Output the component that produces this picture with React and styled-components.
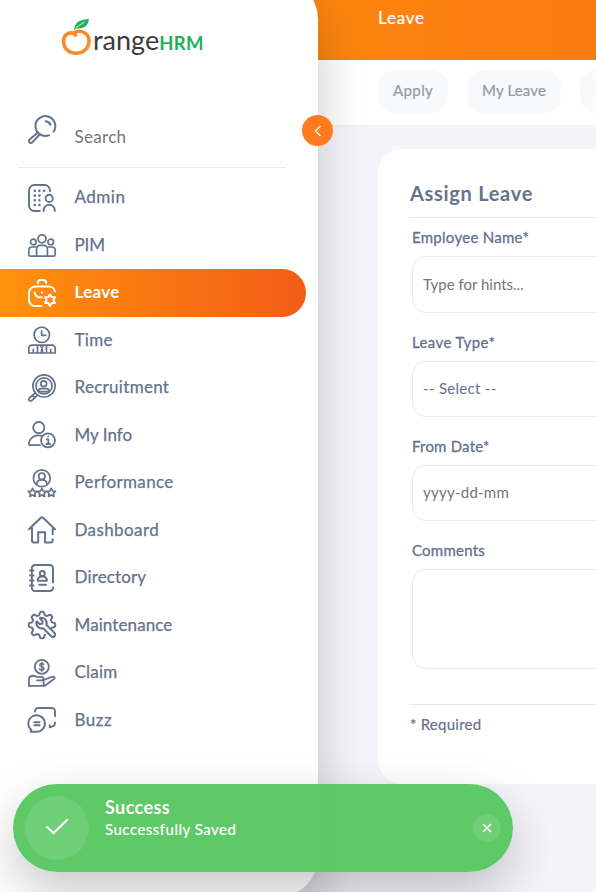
import React from 'react';
import styled, { createGlobalStyle } from 'styled-components';

const Global = createGlobalStyle`
  * { box-sizing: border-box; }
  body { margin: 0; font-family: Lato, "Open Sans", sans-serif; color: #64728c; overflow: hidden; }
  input, textarea, button { font: inherit; }
`;

const Page = styled.div`
  display: grid;
  grid-template: 892px / 1fr;
  height: 892px;
  overflow: hidden;
  background: #f5f4fa;
`;

const Text = styled.span`
  white-space: nowrap;
  letter-spacing: ${p => p.$ls || 0}px;
`;

/* ---------- sidebar ---------- */
const Sidebar = styled.aside`
  grid-area: 1 / 1;
  z-index: 2;
  width: 318px;
  height: 918px;
  margin-top: -21px;
  padding-top: 21px;
  background: #fff;
  border-radius: 0 40px 40px 0;
  box-shadow: 0 25px 50px rgba(0, 0, 0, 0.21);
  position: relative;
`;

const Brand = styled.div`
  display: flex;
  height: 60px;
  padding: 17px 0 0 60px;
`;

const BrandName = styled.div`
  display: flex;
  align-items: baseline;
  height: 44px;
  margin: 3px 0 0 -1px;
  line-height: 40px;
  font-size: 27px;
  color: #3b3b3d;
`;

const BrandSuffix = styled(Text)`
  font-size: 18.5px;
  font-weight: 700;
  color: #20b05b;
`;

const Collapse = styled.button`
  position: absolute;
  right: -15px;
  top: 136px;
  width: 31px;
  height: 31px;
  padding: 0;
  border: 0;
  border-radius: 50%;
  background: #ff7b1d;
  display: grid;
  place-items: center;
`;

const SearchRow = styled.div`
  display: flex;
  height: 53px;
  margin: 54.5px 32px 6.5px 18px;
  padding: 1px 0 0 10px;
  border-bottom: 1px solid #e9eaee;
  gap: 18.5px;
  font-size: 17px;
  color: #757575;
`;

const SearchText = styled(Text)`
  line-height: 20px;
  padding-top: 11.5px;
`;

const Item = styled.a`
  display: flex;
  align-items: center;
  gap: 18.5px;
  height: 47.5px;
  width: 306px;
  padding-left: 28px;
  font-size: 17px;
  font-weight: ${p => (p.$active ? 700 : 400)};
  -webkit-text-stroke: ${p => (p.$active ? 0 : 0.25)}px;
  color: ${p => (p.$active ? '#fff' : '#64728c')};
  border-radius: 0 24px 24px 0;
  background: ${p => (p.$active ? 'linear-gradient(90deg, #ff920b, #f35c17)' : 'none')};
`;

const ItemLabel = styled(Text)`
  padding-bottom: 2px;
`;

const Glyph = styled.svg`
  width: 28px;
  height: 28px;
  flex: none;
  fill: none;
  stroke: currentColor;
  stroke-width: ${p => p.$w || 1.7};
  stroke-linecap: round;
  stroke-linejoin: round;
  overflow: visible;
  color: ${p => p.$color || 'inherit'};
`;

/* ---------- main area ---------- */
const Main = styled.main`
  grid-area: 1 / 1;
  min-width: 0;
  overflow: hidden;
`;

const Header = styled.header`
  width: 1400px;
  height: 60px;
  padding: 7px 0 0 378px;
  background: linear-gradient(90deg, #ff920b, #f35c17);
  color: #fff;
  font-size: 17px;
  line-height: 22px;
  -webkit-text-stroke: 0.2px;
`;

const Tabs = styled.nav`
  display: flex;
  gap: 19px;
  height: 66px;
  padding: 10px 0 0 378px;
  background: #fff;
  border-bottom: 1px solid #efeff2;
`;

const Tab = styled.a`
  flex: none;
  width: ${p => p.$w}px;
  height: 43px;
  padding-left: 15px;
  border-radius: 17px;
  background: #f7f9fb;
  color: #929baa;
  font-size: 15px;
  line-height: 41px;
  -webkit-text-stroke: 0.2px;
`;

const Card = styled.section`
  width: 1000px;
  height: 635px;
  margin: 23px 0 0 378px;
  padding: 31px 31px 0;
  border-radius: 24px;
  background: #fff;
`;

const Title = styled.h1`
  height: 38px;
  margin: 0;
  padding-left: 1px;
  border-bottom: 1px solid #e6e8ee;
  font-size: 20px;
  line-height: 26px;
  font-weight: 700;
`;

const Field = styled.label`
  display: flex;
  flex-direction: column;
  gap: 10px;
  margin: 0 0 ${p => p.$gap}px 3px;
  font-size: 15px;
  line-height: 18px;
`;

const Form = styled.form`
  padding-top: 10px;
`;

const Label = styled(Text)`
  -webkit-text-stroke: 0.3px;
`;

const boxed = `
  width: 500px;
  border: 1px solid #e8eaef;
  border-radius: 14px;
  background: #fff;
  padding: 0 10px;
  font-size: 15px;
  color: #64728c;
  outline: none;
`;

const Input = styled.input`
  ${boxed}
  height: ${p => p.$h}px;
  padding-bottom: 2px;
  letter-spacing: ${p => p.$ls || 0}px;
  &::placeholder { color: #757575; opacity: 1; }
`;

const Select = styled.div`
  ${boxed}
  height: 56px;
  line-height: 52px;
`;

const Area = styled.textarea`
  ${boxed}
  display: block;
  height: 100px;
  resize: none;
`;

const Required = styled.div`
  padding: 10px 0 0 1px;
  border-top: 1px solid #e6e8ee;
  font-size: 15px;
  line-height: 18px;
  -webkit-text-stroke: 0.2px;
`;

/* ---------- toast ---------- */
const Toast = styled.div`
  position: absolute;
  z-index: 3;
  left: 13px;
  top: 784px;
  width: 500px;
  height: 88px;
  padding: 0 12px;
  border-radius: 44px;
  display: flex;
  align-items: center;
  background: rgba(86, 199, 97, 0.96);
  box-shadow: 0 20px 50px rgba(0, 0, 0, 0.22);
  color: #fff;
`;

const Round = styled.div`
  flex: none;
  width: ${p => p.$size}px;
  height: ${p => p.$size}px;
  border-radius: 50%;
  background: rgba(255, 255, 255, 0.11);
  display: grid;
  place-items: center;
`;

const Message = styled.div`
  flex: 1;
  align-self: flex-start;
  display: flex;
  flex-direction: column;
  padding: 12px 0 0 16px;
  font-size: 15px;
  line-height: 21px;
  -webkit-text-stroke: 0.2px;
`;

const Strong = styled(Text)`
  font-size: 18px;
  line-height: 23px;
  font-weight: 700;
  -webkit-text-stroke: 0;
`;

const star = (x, y) =>
  `M${x} ${y - 4.2}l1.3 2.7 3 .4-2.2 2.1.6 3-2.7-1.5-2.7 1.5.6-3-2.2-2.1 3-.4z`;

/* Eight-lobed cog outline, left open at the lower right for the wrench handle. */
const cog = (() => {
  const points = [];
  for (let deg = 72; deg <= 378; deg += 3) {
    const a = (deg * Math.PI) / 180;
    const r = 11.7 + 1.6 * Math.tanh(2.2 * Math.cos(8 * a));
    points.push(`${(14 + r * Math.cos(a)).toFixed(2)} ${(14 + r * Math.sin(a)).toFixed(2)}`);
  }
  return `M${points.join('L')}`;
})();

const icons = {
  search: (
    <>
      <path d="M25.6 15.6A9.9 9.9 0 1 0 21.2 19.2M17.8 5.2a5.5 5.5 0 0 1 4.6 3.6" />
      <path d="M10 16.4L1.6 23.5a1.9 1.9 0 0 0 2.7 2.9L12 18.2" />
    </>
  ),
  admin: (
    <>
      <path d="M11.8 27H6.4A5.4 5.4 0 0 1 1 21.6V6.4A5.4 5.4 0 0 1 6.4 1h10.2A5.4 5.4 0 0 1 22 6.4v.8" />
      <path d="M15.6 27v-.6a5.6 5.6 0 0 1 11.2 0v.6" />
      <circle cx="21.2" cy="14.4" r="3.6" />
      <path strokeWidth="2.6" d="M6.8 6.8h.01M11.4 6.8h.01M16 6.8h.01M6.8 11.6h.01M11.4 11.6h.01M6.8 16.3h.01M11.4 16.3h.01M6.8 21h.01M11.4 21h.01" />
    </>
  ),
  pim: (
    <>
      <circle cx="14" cy="7.8" r="4" />
      <circle cx="5.3" cy="11" r="2.8" />
      <circle cx="22.7" cy="11" r="2.8" />
      <path d="M8.6 25.2v-7.4a3.5 3.5 0 0 1 3.5-3.5h3.8a3.5 3.5 0 0 1 3.5 3.5v7.4M7.6 16H4a3.2 3.2 0 0 0-3.2 3.2v4.500c0 .9.6 1.500 1.500 1.500h23.400c.9 0 1.500-.6 1.500-1.500v-4.500A3.200 3.200 0 0 0 24 16h-3.600" />
    </>
  ),
  leave: (
    <>
      <path d="M9.8 4.3V4a3 3 0 0 1 3-3h2.4a3 3 0 0 1 3 3v.3M13.5 27H7.2A6.2 6.2 0 0 1 1 20.8v-7A6.2 6.2 0 0 1 7.2 7.6h13.6a6.2 6.2 0 0 1 6.2 5M6.5 13.6c1 3.6 3.7 5.2 7.2 4.7M14 13.5h.1" />
      <path d="M22 15.3l1.7 2.8 3.3.1-1.6 2.9 1.6 2.9-3.3.1L22 26.900l-1.700-2.800-3.300-.1 1.600-2.900-1.600-2.900 3.300-.1z" />
    </>
  ),
  time: (
    <>
      <circle cx="13.8" cy="8.8" r="7.7" />
      <path d="M13.6 4.8v4.6h4.2M.8 27v-4.8a3 3 0 0 1 3-3h20.4a3 3 0 0 1 3 3V27zM5.3 27v-3.6M22.7 27v-3.6M9.5 19.2V27M18.5 19.2V27" />
      <path strokeWidth="1.3" d="M12 19.4l2 2.4 2-2.4M14 21.8l-1 5M14 21.8l1 5" />
    </>
  ),
  recruitment: (
    <>
      <circle cx="16" cy="11.9" r="11.1" />
      <circle cx="16" cy="11.9" r="8" />
      <circle cx="15.7" cy="9.7" r="2.9" />
      <path d="M10.6 17.6v-.3c0-1.6 1-2.6 2.6-2.6h5.2c1.6 0 2.6 1 2.6 2.6v.3zM7.1 19.2L1.4 24a1.7 1.7 0 0 0 2.4 2.6l5.4-5.3M4.6 21.5l2.2 2.3" />
    </>
  ),
  info: (
    <>
      <circle cx="10.8" cy="6.6" r="5.6" />
      <path d="M12 24.2H2.4c-1 0-1.6-.6-1.5-1.6.5-5 4.5-8.2 9.4-8.2 1.6 0 3 .3 4.2.9" />
      <circle cx="20" cy="19.3" r="7" />
      <path d="M20.2 15.4h.01M18.7 18.4h1.6V23M18.4 23h3.6" />
    </>
  ),
  performance: (
    <>
      <circle cx="13.8" cy="9.3" r="8.4" />
      <circle cx="13.8" cy="7.3" r="3.2" />
      <path d="M8.7 15.6v-.4c0-2.5 1.9-4.3 5.1-4.3s5.1 1.8 5.1 4.3v.4" />
      <path d={star(4.6, 23.5)} />
      <path d={star(13.9, 23.5)} />
      <path d={star(23.2, 23.5)} />
    </>
  ),
  dashboard: (
    <path d="M1 13.2L12.8 1.8a1.6 1.6 0 0 1 2.3 0L27 13.2M4 12v12.5c0 1.3.7 2 2 2h4.2V16.2h6.9v10.3h5.2c1.6 0 2.4-.8 2.4-2.2v-1M24.7 13v5.2" />
  ),
  directory: (
    <>
      <path d="M25 18.5V4.2A3.2 3.2 0 0 0 21.8 1H7a3.2 3.2 0 0 0-3.2 3.2v19.6A3.2 3.2 0 0 0 7 27h14.8a3.2 3.2 0 0 0 3.2-3.2v-.6M2 6.4h3.6M2 11.5h3.6M2 16.5h3.6M2 21.6h3.6" />
      <circle cx="14.3" cy="9.5" r="2.5" />
      <path d="M9.7 16.8c0-2.7 1.7-4.2 4.6-4.2s4.6 1.5 4.6 4.2zM11.3 20.8h6.7" />
    </>
  ),
  maintenance: (
    <>
      <path d={cog} />
      <path d="M8.6 10.2l3.2 3 2.4-.5.4-2.5-3-3.1c4.4-1.2 8.2 2.6 6.9 6.9l8 7.9a2.2 2.2 0 0 1-3.3 3.3l-8-8c-4.200 1-7.900-2.600-6.600-7z" />
    </>
  ),
  claim: (
    <>
      <circle cx="13.8" cy="7.8" r="7" />
      <path strokeWidth="1.5" d="M15.8 5.7c-.4-.9-1.1-1.2-2-1.2-1.2 0-2 .6-2 1.6 0 2.3 4.1 1 4.1 3.3 0 1.1-.9 1.7-2.1 1.7-1.1 0-1.9-.5-2.2-1.4M13.8 3.3v9" />
      <path d="M1 26.8V18.600c2-2.100 4.900-2.200 7.300-.8h5.200c2.500 0 2.500 3.500 0 3.500H9M15.500 21l8.300-3.200c2.200-.8 3.900.9 2.100 2.200L18 26c-.8.6-1.300.8-2.200.8z" />
      <path d="M1 26.800h15" />
    </>
  ),
  buzz: (
    <>
      <path d="M7 5.6V5.200A3.200 3.200 0 0 1 10.300 2h13.400A3.200 3.200 0 0 1 27 5.200v5M27 16.500v.8a3 3 0 0 1-2 2.800l-3.300 1.400v-2.300" />
      <path d="M3.300 23.900A8.300 8.300 0 1 1 8 25.800H2.600zM6.400 16.200h5.200M6.400 19.300h5.200" />
    </>
  ),
};

const Icon = ({ name, ...rest }) => (
  <Glyph viewBox="0 0 28 28" aria-hidden="true" {...rest}>{icons[name]}</Glyph>
);

const menu = [
  ['admin', 'Admin', 0.5, 1.9],
  ['pim', 'PIM', -0.1, 1.7],
  ['leave', 'Leave', 0.3, 2],
  ['time', 'Time', 0.3, 1.7],
  ['recruitment', 'Recruitment', 0.3, 1.7],
  ['info', 'My Info', 0, 1.8],
  ['performance', 'Performance', 0.35, 1.7],
  ['dashboard', 'Dashboard', 0.4, 2],
  ['directory', 'Directory', 0.15, 2],
  ['maintenance', 'Maintenance', 0.1, 2],
  ['claim', 'Claim', 0.2, 1.8],
  ['buzz', 'Buzz', 0.5, 1.9],
];

export default function App() {
  return (
    <>
      <Global />
      <Page>
        <Main>
          <Header><Text $ls={0.8}>Leave</Text></Header>
          <Tabs>
            <Tab $w={70}><Text $ls={0.4}>Apply</Text></Tab>
            <Tab $w={94}><Text $ls={0.15}>My Leave</Text></Tab>
            <Tab $w={120}><Text>Entitlements</Text></Tab>
          </Tabs>
          <Card>
            <Title><Text $ls={0.7}>Assign Leave</Text></Title>
            <Form>
              <Field $gap={20}>
                <Label $ls={0.28}>Employee Name*</Label>
                <Input $h={57} placeholder="Type for hints..." />
              </Field>
              <Field $gap={20}>
                <Label $ls={0.4}>Leave Type*</Label>
                <Select><Text $ls={0.3}>-- Select --</Text></Select>
              </Field>
              <Field $gap={20}>
                <Label $ls={0.2}>From Date*</Label>
                <Input $h={56} $ls={0.25} placeholder="yyyy-dd-mm" />
              </Field>
              <Field $gap={35}>
                <Label $ls={0.25}>Comments</Label>
                <Area />
              </Field>
            </Form>
            <Required><Text $ls={0.25}>* Required</Text></Required>
          </Card>
        </Main>

        <Sidebar>
          <Brand>
            <svg width="34" height="40" viewBox="0 0 34 40" fill="none">
              <path d="M15.5 18C12 14.3 3.6 15.5 3.6 24.5 3.6 31.5 9 36.3 16 36.3c7.6 0 13-5.3 13-12.3 0-7.5-7.5-11.8-14.5-8.5" stroke="#f98a2b" strokeWidth="3.6" strokeLinecap="round" />
              <path d="M14.5 10.500C16 4.500 20 2.800 29 2c-1 7-5 10.200-12.500 9.200L14 13z" fill="#25ae5b" />
              <path d="M16 10.500L24.500 5" stroke="#fff" strokeWidth=".8" />
            </svg>
            <BrandName><Text>range</Text><BrandSuffix $ls={0.3}>HRM</BrandSuffix></BrandName>
          </Brand>
          <SearchRow>
            <Icon name="search" $w={2} $color="#64728c" />
            <SearchText $ls={0.3}>Search</SearchText>
          </SearchRow>
          {menu.map(([icon, label, ls, weight]) => (
            <Item key={icon} $active={icon === 'leave'}>
              <Icon name={icon} $w={weight} />
              <ItemLabel $ls={ls}>{label}</ItemLabel>
            </Item>
          ))}
          <Collapse aria-label="Collapse">
            <svg width="8" height="12" viewBox="0 0 8 12" fill="none" stroke="#fff" strokeWidth="1.3">
              <path d="M6.5 1L1.5 6l5 5" />
            </svg>
          </Collapse>
        </Sidebar>

        <Toast role="status">
          <Round $size={64}>
            <svg width="24" height="18" viewBox="0 0 24 18" fill="none" stroke="#fff" strokeWidth="2.2">
              <path d="M2 8l6.5 6L22 1" strokeLinecap="round" />
            </svg>
          </Round>
          <Message>
            <Strong $ls={0.4}>Success</Strong>
            <Text $ls={0.5}>Successfully Saved</Text>
          </Message>
          <Round $size={28}>
            <svg width="10" height="10" viewBox="0 0 10 10" stroke="#fff" strokeWidth="1.5">
              <path d="M1 1l8 8M9 1L1 9" />
            </svg>
          </Round>
        </Toast>
      </Page>
    </>
  );
}
